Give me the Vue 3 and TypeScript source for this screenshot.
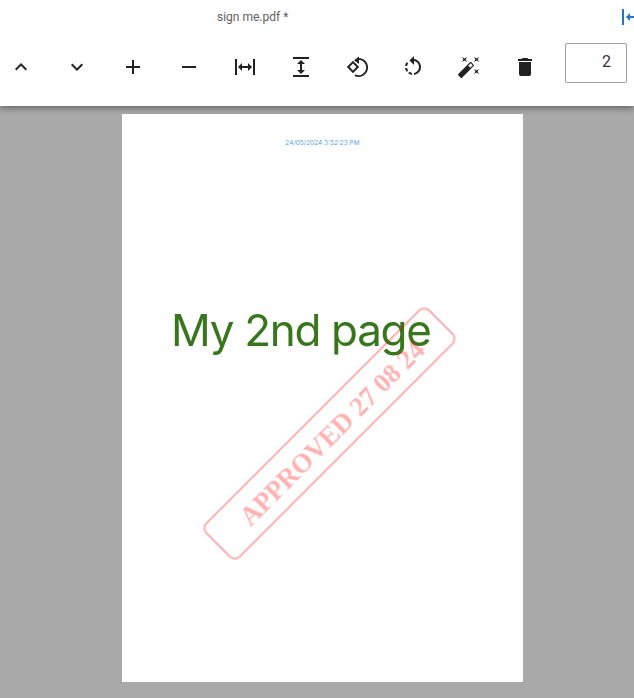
<script setup lang="ts">
const icons: string[] = [
  'M7.41,15.41L12,10.83L16.59,15.41L18,14L12,8L6,14L7.41,15.41Z',
  'M7.41,8.58L12,13.17L16.59,8.58L18,10L12,16L6,10L7.41,8.58Z',
  'M19,13H13V19H11V13H5V11H11V5H13V11H19V13Z',
  'M19,13H5V11H19V13Z',
  'M9,11H15V8L19,12L15,16V13H9V16L5,12L9,8V11M2,20V4H4V20H2M20,20V4H22V20H20Z',
  'M13,9V15H16L12,19L8,15H11V9H8L12,5L16,9H13M4,2H20V4H4V2M4,20H20V22H4V20Z',
  'M13.5,3A9.5,9.5 0 1 1 9.5,21.1L10.2,19.6A7.8,7.8 0 1 0 13.5,4.7ZM14,1.5V9L9,5.25ZM8,5.8L14.2,12L8,18.2L1.8,12ZM8,8.6L4.6,12L8,15.4L11.4,12Z',
  'M13,4.07V1L8.45,5.55L13,10V6.09C15.84,6.57 18,9.03 18,12C18,14.97 15.84,17.43 13,17.91V19.93C16.95,19.44 20,16.08 20,12C20,7.92 16.95,4.56 13,4.07M7.1,18.32C8.26,19.22 9.61,19.76 11,19.93V17.9C10.13,17.75 9.29,17.41 8.54,16.87L7.1,18.32M6.09,13H4.07C4.24,14.39 4.79,15.73 5.69,16.89L7.1,15.47C6.58,14.72 6.23,13.88 6.09,13M7.11,8.53L5.7,7.11C4.8,8.27 4.24,9.61 4.07,11H6.09C6.23,10.13 6.58,9.28 7.11,8.53Z',
  'M7.5,5.6L5,7L6.4,4.5L5,2L7.5,3.4L10,2L8.6,4.5L10,7L7.5,5.6M19.5,15.4L22,14L20.6,16.5L22,19L19.5,17.6L17,19L18.4,16.5L17,14L19.5,15.4M22,2L20.6,4.5L22,7L19.5,5.6L17,7L18.4,4.5L17,2L19.5,3.4L22,2M13.34,12.78L15.78,10.34L13.66,8.22L11.22,10.66L13.34,12.78M14.37,7.29L16.71,9.63C17.1,10 17.1,10.65 16.71,11.04L5.04,22.71C4.65,23.1 4,23.1 3.63,22.71L1.29,20.37C0.9,20 0.9,19.35 1.29,18.96L12.96,7.29C13.35,6.9 14,6.9 14.37,7.29Z',
  'M19,4H15.5L14.5,3H9.5L8.5,4H5V6H19M6,19A2,2 0 0,0 8,21H16A2,2 0 0,0 18,19V7H6V19Z',
]
</script>

<template>
  <div class="app">
    <header class="bar">
      <div class="title-row">
        <span class="title">sign me.pdf *</span>
        <svg class="collapse" viewBox="0 0 12 16" width="12" height="16">
          <path fill="#1976d2" d="M0,0H2V16H0ZM4,8L8,4V7H12V9H8V12Z" />
        </svg>
      </div>
      <div class="tools">
        <button v-for="(d, i) in icons" :key="i" class="tool" type="button">
          <svg viewBox="0 0 24 24" width="24" height="24"><path :d="d" fill="#212121" /></svg>
        </button>
        <input class="page-input" type="text" value="2" />
      </div>
    </header>
    <main class="viewer">
      <section class="page">
        <p class="stamp-date">24/05/2024 3:52:23 PM</p>
        <h1 class="heading">My 2nd page</h1>
        <div class="stamp">APPROVED 27 08 24</div>
      </section>
    </main>
  </div>
</template>

<style>
html, body { margin: 0; height: 100%; overflow: hidden; }
</style>

<style scoped>
.app {
  width: 634px;
  height: 698px;
  display: flex;
  flex-direction: column;
  background: #a9a9a9;
  overflow: hidden;
  font-family: Roboto, sans-serif;
}
.bar {
  height: 106px;
  flex: none;
  background: #fff;
  box-shadow: 0 2px 4px -1px rgba(0,0,0,.2), 0 4px 5px rgba(0,0,0,.14), 0 1px 10px rgba(0,0,0,.12);
  position: relative;
  z-index: 1;
}
.title-row {
  height: 34px;
  display: flex;
  align-items: center;
  padding-left: 217px;
  overflow: hidden;
}
.title {
  font-size: 12px;
  color: #616161;
}
.collapse {
  margin-left: auto;
  flex: none;
}
.tools {
  display: flex;
  align-items: flex-start;
  gap: 20px;
  padding: 9px 7px 0 3px;
}
.tool {
  width: 36px;
  height: 36px;
  margin-top: 6px;
  padding: 0;
  border: 0;
  background: none;
  display: flex;
  align-items: center;
  justify-content: center;
  flex: none;
}
.page-input {
  width: 62px;
  height: 40px;
  margin-left: 2px;
  box-sizing: border-box;
  border: 1px solid #a0a0a0;
  border-radius: 2px;
  font: 16px Roboto, sans-serif;
  color: #333;
  text-align: right;
  padding: 0 15px 4px 0;
  outline: none;
}
.viewer {
  flex: 1;
  display: flex;
  justify-content: center;
  align-items: flex-start;
  padding: 8px 0 0 11px;
}
.page {
  width: 401px;
  height: 568px;
  background: #fff;
  position: relative;
  display: flex;
  flex-direction: column;
  align-items: center;
}
.stamp-date {
  margin: 25px 0 0;
  font: 6.5px Inter, sans-serif;
  color: #5aa5e6;
}
.heading {
  margin: 154px 0 0 49px;
  align-self: flex-start;
  font: 400 44px/1.36 Inter, sans-serif;
  letter-spacing: -1.3px;
  color: #38761d;
  will-change: transform;
}
.stamp {
  position: absolute;
  left: 48.5px;
  top: 294.5px;
  width: 317px;
  height: 49px;
  box-sizing: border-box;
  border: 2px solid rgba(255, 0, 0, .3);
  border-radius: 8px;
  padding-left: 4px;
  color: rgba(255, 0, 0, .3);
  font: 700 27px/49px "Liberation Serif", serif;
  letter-spacing: -.15px;
  text-align: center;
  white-space: nowrap;
  transform: rotate(-45deg);
}
</style>
